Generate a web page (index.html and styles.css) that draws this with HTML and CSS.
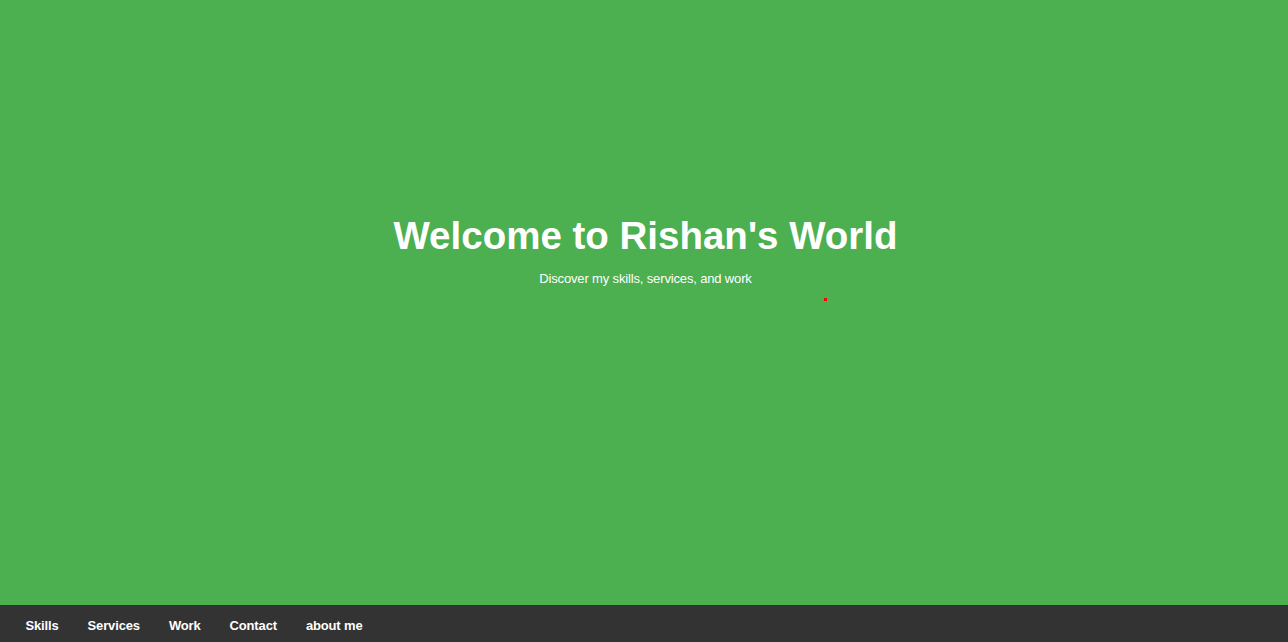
FILE: index.html
```html
<!DOCTYPE html>
<html lang="en">
<head>
<meta charset="utf-8">
<title>Rishan's World</title>
<link rel="stylesheet" href="styles.css">
</head>
<body>
<header class="hero">
  <h1 class="hero-title">Welcome to Rishan's World</h1>
  <p class="hero-sub">Discover my skills, services, and work</p>
  <span class="dot"></span>
</header>
<nav class="navbar">
  <a href="#skills">Skills</a>
  <a href="#services">Services</a>
  <a href="#work">Work</a>
  <a href="#contact">Contact</a>
  <a href="#about">about me</a>
</nav>
</body>
</html>
```
FILE: styles.css
```css
html, body {
  margin: 0;
  padding: 0;
}
body {
  font-family: "Liberation Sans", Arial, sans-serif;
  background: #4CAF50;
  color: #fff;
  height: 642px;
  overflow: hidden;
}
.hero {
  position: relative;
  height: 605px;
  box-sizing: border-box;
  padding-top: 214px;
  text-align: center;
  background: #4CAF50;
}
.hero-title {
  margin: 0 0 0 3px;
  font-size: 38.5px;
  font-weight: bold;
}
.hero-sub {
  margin: 13px 0 0 3px;
  font-size: 13px;
  letter-spacing: -0.15px;
}
.dot {
  position: absolute;
  left: 824px;
  top: 298px;
  width: 3px;
  height: 3px;
  background: #ff0000;
}
.navbar {
  display: flex;
  height: 37px;
  align-items: center;
  background: #333333;
  padding-left: 11px;
}
.navbar a {
  color: #fff;
  text-decoration: none;
  font-weight: bold;
  font-size: 13px;
  letter-spacing: -0.15px;
  padding: 3px 14.5px 0;
}
```
